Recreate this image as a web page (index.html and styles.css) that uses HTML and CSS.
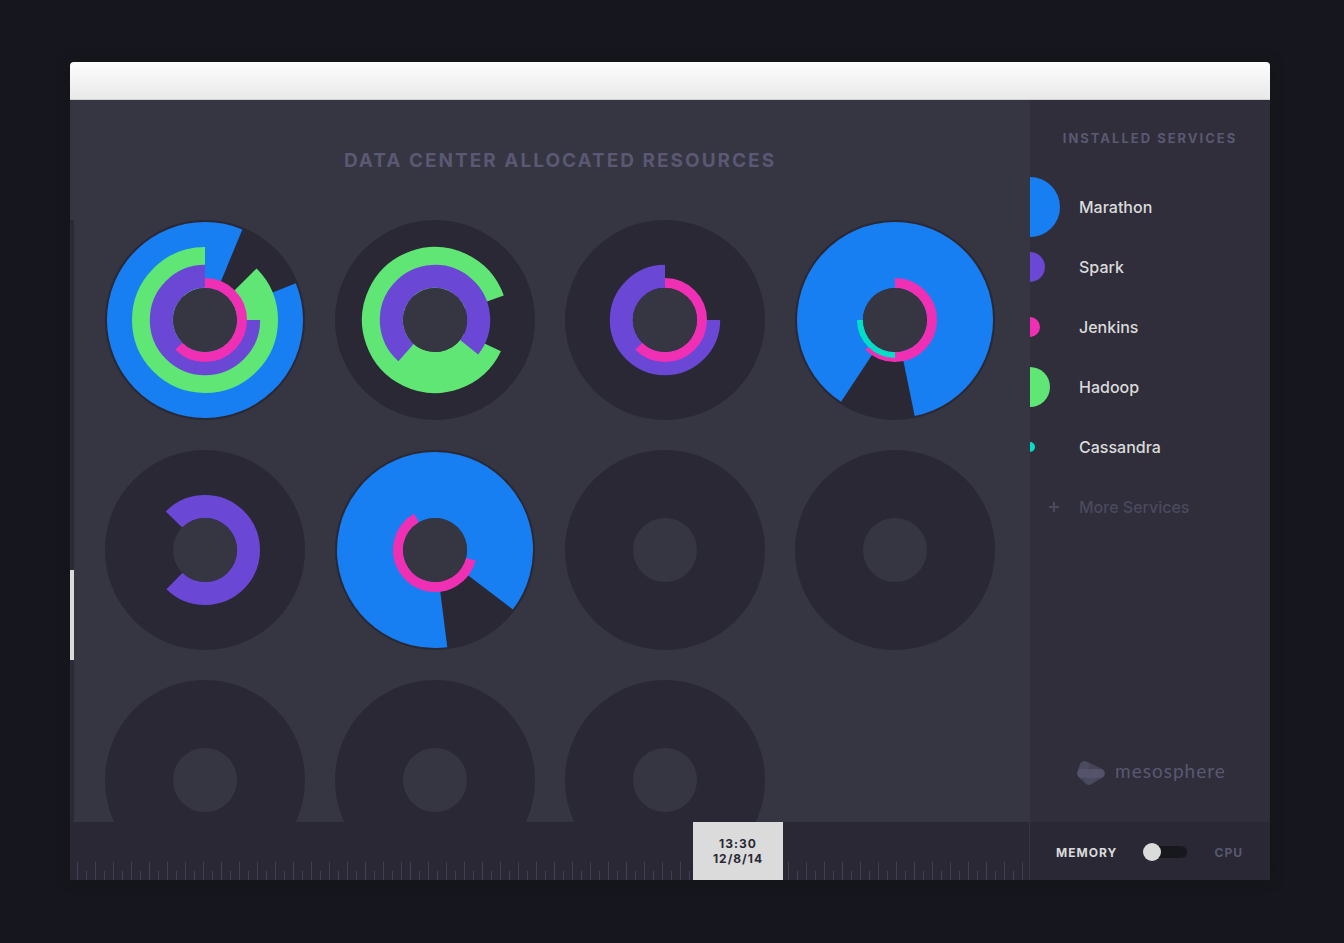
FILE: index.html
```
<!DOCTYPE html>
<html lang="en">
<head>
<meta charset="utf-8">
<title>Data Center Allocated Resources</title>
<link rel="stylesheet" href="styles.css">
</head>
<body>
<div class="window">
  <header class="titlebar"></header>
  <div class="content">
    <main class="main">
      <h1 class="title">DATA CENTER ALLOCATED RESOURCES</h1>
      <div class="viewport">
        <div class="scroll"><div class="thumb"></div></div>
        <div class="nodes">
          <svg class="node" viewBox="0 0 200 200">
            <circle class="base" cx="100" cy="100" r="66"/>
            <circle class="ring marathon" cx="100" cy="100" r="65" pathLength="360" stroke-dasharray="314.5 360" transform="rotate(-22.1 100 100)"/>
            <circle class="ring hadoop" cx="100" cy="100" r="52.5" pathLength="360" stroke-dasharray="315 360" transform="rotate(-45 100 100)"/>
            <circle class="ring spark" cx="100" cy="100" r="43.7" pathLength="360" stroke-dasharray="270 360"/>
            <circle class="ring jenkins" cx="100" cy="100" r="37" pathLength="360" stroke-dasharray="225 360" transform="rotate(-90 100 100)"/>
            <circle class="hole" cx="100" cy="100" r="32"/>
          </svg>
          <svg class="node" viewBox="0 0 200 200">
            <circle class="base" cx="100" cy="100" r="66"/>
            <circle class="ring hadoop" cx="100" cy="100" r="52.5" pathLength="360" stroke-dasharray="315 360" transform="rotate(25.4 100 100)"/>
            <circle class="ring spark" cx="100" cy="100" r="43.7" pathLength="360" stroke-dasharray="267 360" transform="rotate(131.5 100 100)"/>
            <circle class="hole" cx="100" cy="100" r="32"/>
          </svg>
          <svg class="node" viewBox="0 0 200 200">
            <circle class="base" cx="100" cy="100" r="66"/>
            <circle class="ring spark" cx="100" cy="100" r="43.7" pathLength="360" stroke-dasharray="270 360"/>
            <circle class="ring jenkins" cx="100" cy="100" r="37" pathLength="360" stroke-dasharray="225 360" transform="rotate(-90 100 100)"/>
            <circle class="hole" cx="100" cy="100" r="32"/>
          </svg>
          <svg class="node" viewBox="0 0 200 200">
            <circle class="base" cx="100" cy="100" r="66"/>
            <circle class="ring marathon" cx="100" cy="100" r="65" pathLength="360" stroke-dasharray="315 360" transform="rotate(123.4 100 100)"/>
            <circle class="ring jenkins" cx="100" cy="100" r="37" pathLength="360" stroke-dasharray="225 360" transform="rotate(-90 100 100)"/>
            <circle class="ring cassandra" cx="100" cy="100" r="35" pathLength="360" stroke-dasharray="90 360" transform="rotate(90 100 100)"/>
            <circle class="hole" cx="100" cy="100" r="32"/>
          </svg>
          <svg class="node" viewBox="0 0 200 200">
            <circle class="base" cx="100" cy="100" r="66"/>
            <circle class="ring spark" cx="100" cy="100" r="43.5" pathLength="360" stroke-dasharray="270 360" transform="rotate(-135.5 100 100)"/>
            <circle class="hole" cx="100" cy="100" r="32"/>
          </svg>
          <svg class="node" viewBox="0 0 200 200">
            <circle class="base" cx="100" cy="100" r="66"/>
            <circle class="ring marathon" cx="100" cy="100" r="65" pathLength="360" stroke-dasharray="314.6 360" transform="rotate(82.8 100 100)"/>
            <circle class="ring jenkins" cx="100" cy="100" r="37" pathLength="360" stroke-dasharray="225.5 360" transform="rotate(14.5 100 100)"/>
            <circle class="hole" cx="100" cy="100" r="32"/>
          </svg>
          <svg class="node" viewBox="0 0 200 200"><circle class="base" cx="100" cy="100" r="66"/></svg>
          <svg class="node" viewBox="0 0 200 200"><circle class="base" cx="100" cy="100" r="66"/></svg>
          <svg class="node" viewBox="0 0 200 200"><circle class="base" cx="100" cy="100" r="66"/></svg>
          <svg class="node" viewBox="0 0 200 200"><circle class="base" cx="100" cy="100" r="66"/></svg>
          <svg class="node" viewBox="0 0 200 200"><circle class="base" cx="100" cy="100" r="66"/></svg>
        </div>
      </div>
    </main>
    <aside class="sidebar">
      <h2 class="heading">INSTALLED SERVICES</h2>
      <ul class="services">
        <li class="service"><span class="marker"><span class="dot dot-marathon"></span></span>Marathon</li>
        <li class="service"><span class="marker"><span class="dot dot-spark"></span></span>Spark</li>
        <li class="service"><span class="marker"><span class="dot dot-jenkins"></span></span>Jenkins</li>
        <li class="service"><span class="marker"><span class="dot dot-hadoop"></span></span>Hadoop</li>
        <li class="service"><span class="marker"><span class="dot dot-cassandra"></span></span>Cassandra</li>
      </ul>
      <button class="more" type="button">
        <span class="plus"><svg width="10" height="10" viewBox="0 0 10 10"><path d="M5 0v10M0 5h10" stroke="currentColor" stroke-width="2"/></svg></span>More Services
      </button>
      <div class="brand">
        <svg class="logo" width="28" height="24" viewBox="0 0 28 24" fill="none" stroke="#5a5872" stroke-linecap="round" stroke-linejoin="round">
          <path d="M7.500 5L5 12.500L12 19L23 12.500Z" fill="#5a5872" stroke-width="10" opacity=".55"/>
          <path d="M5 12.500H23" stroke-width="9" opacity=".7"/>
          <path d="M7.500 5L5 12.500M17.500 12.500L12 19" stroke-width="9" opacity=".3"/>
        </svg>
        <span class="brand-name">mesosphere</span>
      </div>
    </aside>
  </div>
  <footer class="footer">
    <div class="timeline">
      <div class="ticks ticks-past"></div>
      <div class="ticks ticks-recent"></div>
      <time class="stamp" datetime="2014-12-08T13:30">13:30<br>12/8/14</time>
    </div>
    <div class="mode">
      <label class="mode-label on" for="mode">MEMORY</label>
      <input class="switch" id="mode" type="checkbox" role="switch">
      <label class="mode-label" for="mode">CPU</label>
    </div>
  </footer>
</div>
</body>
</html>
```
FILE: styles.css
```
* {
  box-sizing: border-box;
}

body {
  margin: 0;
  padding: 62px 74px 63px 70px;
  min-height: 100vh;
  display: flex;
  background: #16171e;
  color: #dbdbdb;
  font-family: Inter, "Liberation Sans", sans-serif;
}

.window {
  flex: 1;
  min-width: 0;
  display: flex;
  flex-direction: column;
  background: #363542;
  border-radius: 4px 4px 2px 2px;
  overflow: hidden;
  box-shadow: 0 0 12px rgba(20, 20, 20, 0.9);
}

.titlebar {
  flex: none;
  height: 38px;
  background: linear-gradient(#fdfdfd, #e9e9e9);
  border-bottom: 1px solid #cfcfd2;
}

.content {
  flex: 1 1 0;
  min-height: 0;
  display: flex;
}

.main {
  flex: 1;
  min-width: 0;
  display: flex;
  flex-direction: column;
}

.title {
  flex: none;
  margin: 0;
  padding: 2px 0 0 20px;
  line-height: 118px;
  text-align: center;
  font-size: 19px;
  font-weight: 700;
  letter-spacing: 2px;
  color: #5a5872;
}

.viewport {
  flex: 1 1 0;
  min-height: 0;
  display: flex;
  overflow: hidden;
}

.scroll {
  flex: none;
  width: 4px;
  padding-top: 350px;
  background: #2b2a36;
}

.thumb {
  height: 90px;
  background: #dbdbdb;
}

.nodes {
  flex: 1;
  align-self: flex-start;
  display: grid;
  grid-template-columns: repeat(4, minmax(0, 1fr));
  grid-auto-rows: max-content;
  align-content: start;
  gap: 30px;
  padding: 0 35px 0 31px;
}

.node {
  display: block;
  width: 100%;
  aspect-ratio: 1;
}

.base {
  fill: none;
  stroke: #292834;
  stroke-width: 68px;
}

.hole {
  fill: #363542;
}

.ring {
  fill: none;
}

.marathon {
  stroke: #187ff2;
  stroke-width: 66px;
}

.hadoop {
  stroke: #5fe674;
  stroke-width: 41px;
}

.spark {
  stroke: #6a47d5;
  stroke-width: 23px;
}

.jenkins {
  stroke: #f030b4;
  stroke-width: 10px;
}

.cassandra {
  stroke: #00dec6;
  stroke-width: 6px;
}

.sidebar {
  flex: none;
  width: 240px;
  display: flex;
  flex-direction: column;
  background: #2f2e3a;
}

.heading {
  margin: 0;
  line-height: 77px;
  text-align: center;
  font-size: 13px;
  font-weight: 700;
  letter-spacing: 2px;
  color: #5a5872;
}

.services {
  margin: 0;
  padding: 0;
  list-style: none;
}

.service,
.more {
  display: flex;
  align-items: center;
  height: 60px;
  font-size: 16px;
  font-weight: 500;
}

.marker,
.plus {
  flex: none;
  width: 49px;
}

.dot {
  display: block;
}

.dot-marathon {
  width: 30px;
  height: 60px;
  border-radius: 0 30px 30px 0;
  background: #187ff2;
}

.dot-spark {
  width: 15px;
  height: 30px;
  border-radius: 0 15px 15px 0;
  background: #6a47d5;
}

.dot-jenkins {
  width: 10px;
  height: 20px;
  border-radius: 0 10px 10px 0;
  background: #f030b4;
}

.dot-hadoop {
  width: 20px;
  height: 40px;
  border-radius: 0 20px 20px 0;
  background: #5fe674;
}

.dot-cassandra {
  width: 5px;
  height: 10px;
  border-radius: 0 5px 5px 0;
  background: #00dec6;
}

.more {
  margin: 0;
  padding: 0;
  border: 0;
  background: none;
  color: #4b495f;
  font-family: inherit;
  text-align: left;
}

.plus {
  display: flex;
  padding-left: 19px;
}

.brand {
  display: flex;
  align-items: flex-start;
  gap: 10px;
  margin-top: auto;
  padding: 0 0 37px 47px;
}

.brand-name {
  font-family: Lato, "Open Sans", sans-serif;
  font-size: 19px;
  line-height: 20px;
  letter-spacing: 1px;
  color: #5a5872;
}

.footer {
  flex: none;
  display: flex;
  height: 58px;
  background: #292834;
}

.timeline {
  position: relative;
  flex: 1;
  min-width: 0;
  display: flex;
  align-items: flex-end;
  border-right: 1px solid #363542;
}

.ticks {
  height: 18px;
  background-image:
    repeating-linear-gradient(90deg, #403e53 0 1px, transparent 1px 18px),
    repeating-linear-gradient(90deg, transparent 0 9px, #403e53 9px 10px, transparent 10px 18px);
  background-size: 100% 18px, 100% 9px;
  background-position: 0 0, 0 9px;
  background-repeat: no-repeat;
}

.ticks-past {
  flex: none;
  width: 333px;
  margin-left: 7px;
}

.ticks-recent {
  flex: 1;
}

.stamp {
  position: absolute;
  top: 0;
  left: 623px;
  width: 90px;
  height: 58px;
  padding-top: 14px;
  background: #dbdbdb;
  color: #292834;
  text-align: center;
  font-size: 12px;
  font-weight: 700;
  line-height: 15px;
  letter-spacing: 1px;
}

.mode {
  flex: none;
  width: 240px;
  display: flex;
  align-items: center;
  padding: 2px 27px 0 26px;
}

.mode-label {
  flex: 1;
  font-size: 12px;
  font-weight: 700;
  letter-spacing: 1px;
  text-align: right;
  color: #5a5872;
}

.mode-label.on {
  flex: none;
  width: 87px;
  text-align: left;
  color: #dbdbdb;
}

.switch {
  appearance: none;
  display: flex;
  align-items: center;
  width: 44px;
  height: 12px;
  margin: 0;
  border-radius: 6px;
  background: #17181e;
}

.switch::before {
  content: "";
  flex: none;
  width: 18px;
  height: 18px;
  border-radius: 50%;
  background: #dbdbdb;
}

.switch:checked {
  justify-content: flex-end;
}
```
